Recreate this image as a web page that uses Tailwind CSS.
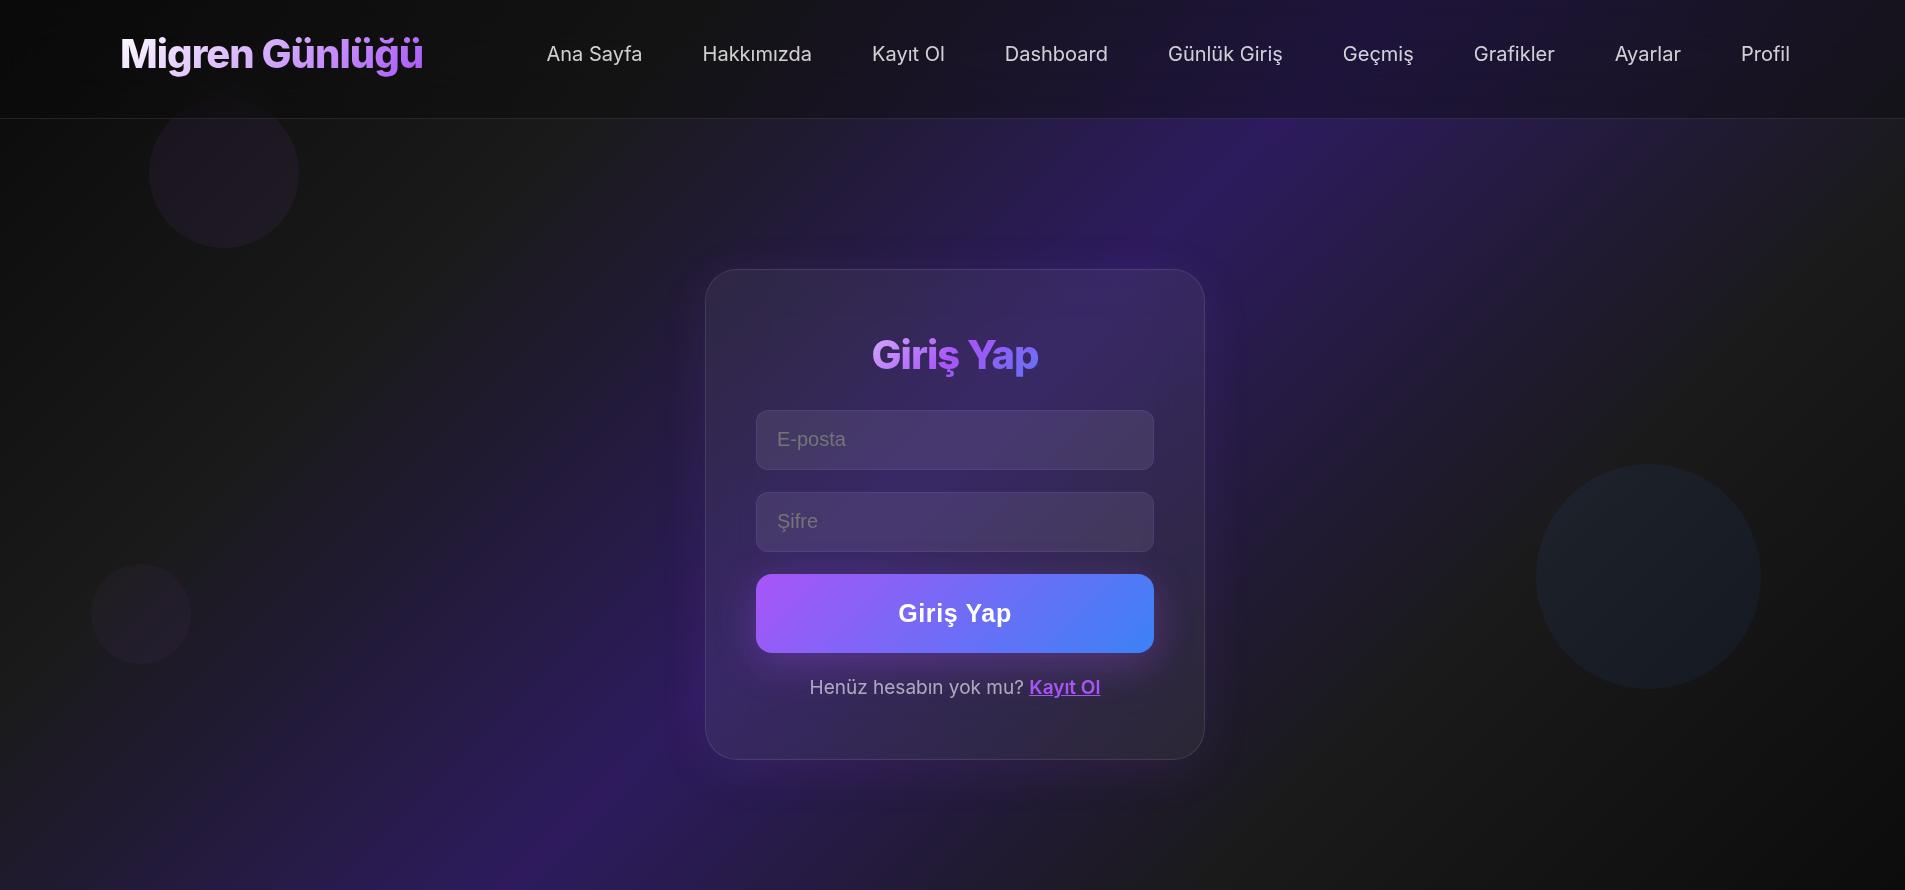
<!DOCTYPE html>
<html lang="tr">
<head>
<meta charset="utf-8">
<meta name="viewport" content="width=device-width, initial-scale=1">
<title>Migren Günlüğü - Giriş Yap</title>
<script src="https://cdn.jsdelivr.net/npm/@tailwindcss/browser@4"></script>
</head>
<body class="relative flex min-h-screen flex-col overflow-x-hidden bg-[linear-gradient(135deg,#0a0a0a_0%,#1a1a1a_25%,#2d1b5e_50%,#1a1a1a_75%,#0c0c0c_100%)] font-['Inter',sans-serif] text-white">
  <!-- Floating background bubbles -->
  <div class="pointer-events-none absolute inset-0 overflow-hidden" aria-hidden="true">
    <div class="absolute top-[98px] left-[149px] size-[150px] rounded-full bg-[#a855f7]/7"></div>
    <div class="absolute top-[464px] right-[144px] size-[225px] rounded-full bg-[#3b82f6]/7"></div>
    <div class="absolute top-[564px] left-[91px] size-[100px] rounded-full bg-[#c084fc]/4"></div>
  </div>

  <header class="relative flex items-start justify-between border-b border-white/10 bg-[#0a0a0a]/40 pt-6 pr-[115px] pb-[34px] pl-[120px] backdrop-blur-xl">
    <a href="#" class="bg-[linear-gradient(135deg,#ffffff_0%,#a855f7_100%)] bg-clip-text text-[40px] leading-[60px] font-extrabold tracking-tight text-transparent">Migren Günlüğü</a>
    <nav class="flex gap-15 text-xl leading-[60px] text-white/80">
      <a href="#">Ana Sayfa</a>
      <a href="#">Hakkımızda</a>
      <a href="#">Kayıt Ol</a>
      <a href="#">Dashboard</a>
      <a href="#">Günlük Giriş</a>
      <a href="#">Geçmiş</a>
      <a href="#">Grafikler</a>
      <a href="#">Ayarlar</a>
      <a href="#">Profil</a>
    </nav>
  </header>

  <main class="relative flex grow items-start justify-center pt-[150px] pb-20 pl-[5px]">
    <form class="flex w-full max-w-[500px] flex-col rounded-[32px] border border-white/10 bg-white/6 px-[50px] pt-[50px] pb-[56px] shadow-[0_10px_50px_rgba(168,85,247,0.1)] backdrop-blur-xl">
      <h1 class="mb-5 self-center bg-[linear-gradient(135deg,#d8b4fe_0%,#a855f7_50%,#3b82f6_120%)] bg-clip-text text-[40px] leading-[70px] font-extrabold tracking-tight text-transparent">Giriş Yap</h1>
      <input type="email" aria-label="E-posta" placeholder="E-posta" class="mb-[22px] h-[60px] rounded-xl border border-[#a855f7]/15 bg-white/8 px-5 pb-0.5 font-['Liberation_Sans',sans-serif] text-xl placeholder:text-[#757575]">
      <input type="password" aria-label="Şifre" placeholder="Şifre" class="mb-[22px] h-[60px] rounded-xl border border-[#a855f7]/15 bg-white/8 px-5 pb-0.5 font-['Liberation_Sans',sans-serif] text-xl placeholder:text-[#757575]">
      <button type="submit" class="h-[79px] rounded-2xl bg-[linear-gradient(135deg,#a855f7_0%,#3b82f6_100%)] font-['Liberation_Sans',sans-serif] text-[25px] font-bold tracking-wide shadow-[0_10px_40px_rgba(168,85,247,0.3)]">Giriş Yap</button>
      <p class="mt-5 text-center text-[19px] leading-[30px] text-white/60">Henüz hesabın yok mu? <a href="#" class="font-semibold text-[#a855f7] underline">Kayıt Ol</a></p>
    </form>
  </main>
</body>
</html>
